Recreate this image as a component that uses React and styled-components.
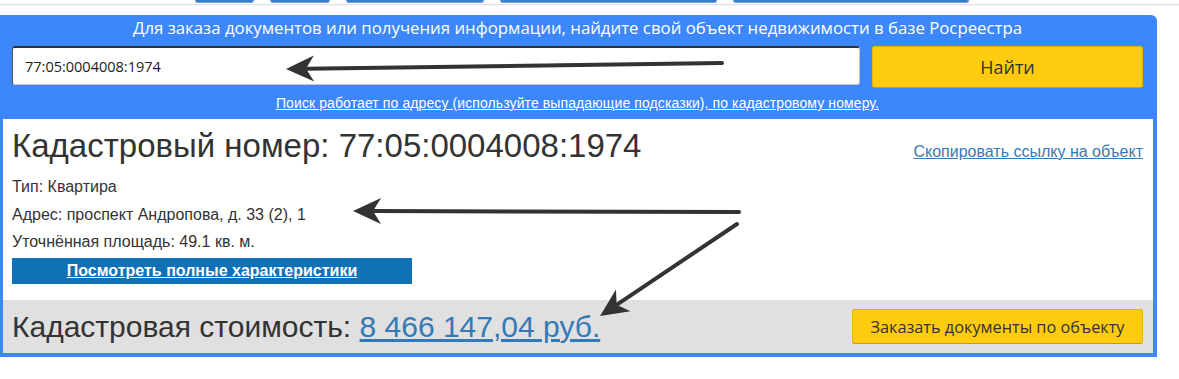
import React from "react";
import styled, { createGlobalStyle } from "styled-components";

const GlobalStyle = createGlobalStyle`
  html, body {
    margin: 0;
    padding: 0;
    background: #fff;
  }
  body {
    font-family: "Liberation Sans", Arial, sans-serif;
    color: #333;
  }
`;

const Page = styled.div`
  position: relative;
  width: 1179px;
  height: 379px;
  overflow: hidden;
`;

const TopNav = styled.div`
  display: flex;
  gap: 16px;
  height: 4px;
  padding-left: 195px;
  border-bottom: 1px solid #e2e2e2;
  box-shadow: 0 1px 2px rgba(0, 0, 0, 0.06);
`;

const Tab = styled.div`
  width: ${(p) => p.w}px;
  height: 2px;
  background: #3b7cc6;
  border: 1px solid #6aa0dd;
  border-top: none;
  border-radius: 0 0 3px 3px;
`;

const Panel = styled.div`
  margin-top: 10px;
  width: 1157px;
  background: #3d87fc;
  border-radius: 0 6px 0 0;
  padding-bottom: 4px;
`;

const Search = styled.div`
  display: flex;
  flex-direction: column;
  align-items: center;
  padding: 2px 14px 8px 12px;
`;

const Lead = styled.div`
  font-family: "Open Sans", sans-serif;
  font-size: 16.8px;
  color: #fff;
  line-height: 22px;
`;

const SearchRow = styled.div`
  display: flex;
  align-self: stretch;
  gap: 12px;
  margin-top: 7px;
`;

const Input = styled.input`
  flex: 1;
  height: 39px;
  box-sizing: border-box;
  border: 1px solid #c8c8c8;
  border-top: 2px solid #333;
  border-left: 1px solid #555;
  border-radius: 3px;
  padding: 0 12px;
  font-family: "Open Sans", sans-serif;
  font-size: 14.5px;
  color: #222;
  background: #fff;
  outline: none;
`;

const YellowButton = styled.button`
  font-family: "Open Sans", sans-serif;
  background: #fecb0f;
  color: #333;
  border: 1px solid #e4b40a;
  border-bottom-color: #c79c05;
  border-radius: 3px;
  cursor: pointer;
  width: ${(p) => p.w}px;
  height: ${(p) => p.h}px;
  font-size: ${(p) => p.fs}px;
  padding: 0;
`;

const Hint = styled.a`
  margin-top: 7px;
  font-size: 14px;
  color: #fff;
  text-decoration: underline;
  letter-spacing: 0.1px;
`;

const Card = styled.div`
  background: #fff;
  margin: 0 4px 0 3px;
`;

const Info = styled.div`
  padding: 6px 10px 16px 9px;
`;

const TitleRow = styled.div`
  display: flex;
  align-items: baseline;
  justify-content: space-between;
`;

const Title = styled.h1`
  margin: 0;
  font-weight: normal;
  font-size: 33px;
  line-height: 42px;
  color: #333;
`;

const Link = styled.a`
  color: #337ab7;
  text-decoration: underline;
  font-size: ${(p) => p.fs || 16}px;
`;

const Lines = styled.div`
  display: flex;
  flex-direction: column;
  gap: 9.5px;
  margin-top: 11px;
  font-size: 16px;
  line-height: 18px;
`;

const FullButton = styled.a`
  display: block;
  width: 400px;
  height: 26px;
  margin-top: 7px;
  background: #1071b6;
  color: #fff;
  font-weight: bold;
  font-size: 16px;
  line-height: 26px;
  text-align: center;
  text-decoration: underline;
`;

const Footer = styled.div`
  display: flex;
  align-items: center;
  justify-content: space-between;
  height: 53px;
  padding: 0 10px 0 9px;
  background: #e0e0e0;
`;

const Cost = styled.div`
  font-size: 30px;
  color: #333;
`;

const Overlay = styled.svg`
  position: absolute;
  top: 0;
  left: 0;
  pointer-events: none;
`;

const Arrow = ({ x1, y1, x2, y2 }) => {
  const dx = x1 - x2;
  const dy = y1 - y2;
  const len = Math.hypot(dx, dy);
  const ux = dx / len;
  const uy = dy / len;
  const px = -uy;
  const py = ux;
  const L = 28;
  const W = 13;
  const N = 20;
  const bx = x2 + ux * L;
  const by = y2 + uy * L;
  const pts = [
    [x2, y2],
    [bx + px * W, by + py * W],
    [x2 + ux * N, y2 + uy * N],
    [bx - px * W, by - py * W],
  ]
    .map((p) => p.join(","))
    .join(" ");
  return (
    <g>
      <line
        x1={x1}
        y1={y1}
        x2={x2 + ux * N}
        y2={y2 + uy * N}
        stroke="#333"
        strokeWidth="4"
        strokeLinecap="round"
      />
      <polygon points={pts} fill="#333" />
    </g>
  );
};

export default function App() {
  return (
    <Page>
      <GlobalStyle />
      <TopNav>
        <Tab w={57} />
        <Tab w={58} />
        <Tab w={136} />
        <Tab w={215} />
        <Tab w={234} />
      </TopNav>
      <Panel>
        <Search>
          <Lead>
            Для заказа документов или получения информации, найдите свой объект недвижимости в базе Росреестра
          </Lead>
          <SearchRow>
            <Input defaultValue="77:05:0004008:1974" />
            <YellowButton w={271} h={42} fs={18}>
              Найти
            </YellowButton>
          </SearchRow>
          <Hint href="#">
            Поиск работает по адресу (используйте выпадающие подсказки), по кадастровому номеру.
          </Hint>
        </Search>
        <Card>
          <Info>
            <TitleRow>
              <Title>Кадастровый номер: 77:05:0004008:1974</Title>
              <Link href="#">Скопировать ссылку на объект</Link>
            </TitleRow>
            <Lines>
              <div>Тип: Квартира</div>
              <div>Адрес: проспект Андропова, д. 33 (2), 1</div>
              <div>Уточнённая площадь: 49.1 кв. м.</div>
            </Lines>
            <FullButton href="#">Посмотреть полные характеристики</FullButton>
          </Info>
          <Footer>
            <Cost>
              Кадастровая стоимость: <Link href="#" fs={30}>8 466 147,04 руб.</Link>
            </Cost>
            <YellowButton w={291} h={35} fs={16.3}>
              Заказать документы по объекту
            </YellowButton>
          </Footer>
        </Card>
      </Panel>
      <Overlay width="1179" height="379">
        <Arrow x1={722} y1={63} x2={286} y2={69} />
        <Arrow x1={739} y1={212} x2={353} y2={211} />
        <Arrow x1={737} y1={224} x2={600} y2={316} />
      </Overlay>
    </Page>
  );
}
